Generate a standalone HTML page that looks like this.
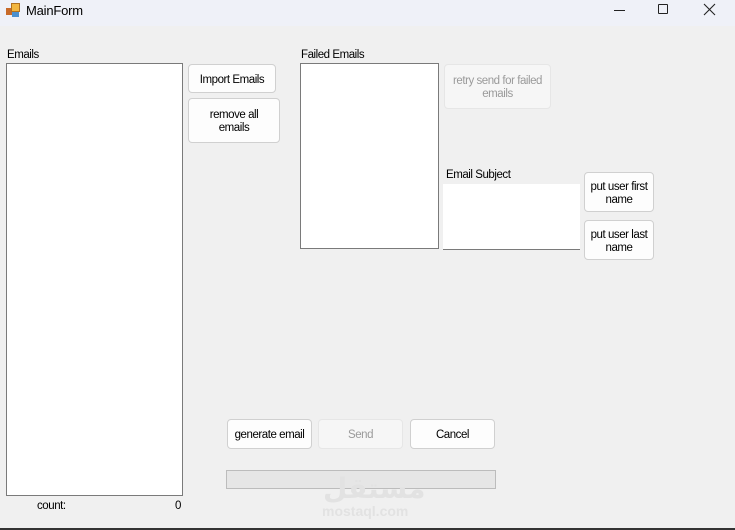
<!DOCTYPE html>
<html><head><style>
body{margin:0;width:735px;height:530px;background:#f0f0f0;font-family:"Liberation Sans",sans-serif;font-size:11.5px;color:#000;position:relative;overflow:hidden;letter-spacing:-0.45px}
.a{position:absolute;box-sizing:border-box}
.tb{left:0;top:0;width:735px;height:26px;background:#eff1f8}
.box{background:#fff;border:1px solid #7a7a7a}
.btn{background:#fdfdfd;border:1px solid #d0d0d0;border-radius:4px;display:flex;align-items:center;justify-content:center;text-align:center;line-height:13px;padding-top:3px}
.dis{background:#f6f6f6;border-color:#e6e6e6;color:#9a9a9a}
</style></head><body>
<div class="a tb"></div>
<div class="a" style="left:6px;top:3px;width:14px;height:14px">
<div class="a" style="left:0;top:5px;width:6px;height:7px;background:#c86a2a"></div>
<div class="a" style="left:5px;top:0;width:9px;height:9px;background:#f2b640;border:1px solid #b07020"></div>
<div class="a" style="left:6px;top:9px;width:7px;height:5px;background:#4a90d0"></div>
</div>
<div class="a" style="left:26px;top:3px;font-size:13px;letter-spacing:-0.2px">MainForm</div>
<div class="a" style="left:614px;top:10px;width:11px;height:1px;background:#222"></div>
<div class="a" style="left:658px;top:4px;width:10px;height:10px;border:1px solid #222;border-radius:1px"></div>
<svg class="a" style="left:703px;top:3px" width="13" height="13"><path d="M1 1L12 12M12 1L1 12" stroke="#222" stroke-width="1.1"/></svg>

<div class="a" style="left:7px;top:49px">Emails</div>
<div class="a box" style="left:6px;top:63px;width:177px;height:433px"></div>
<div class="a btn" style="left:188px;top:64px;width:88px;height:29px">Import Emails</div>
<div class="a btn" style="left:188px;top:98px;width:92px;height:45px">remove all<br>emails</div>

<div class="a" style="left:301px;top:49px">Failed Emails</div>
<div class="a box" style="left:300px;top:63px;width:139px;height:186px"></div>
<div class="a btn dis" style="left:444px;top:64px;width:107px;height:45px">retry send for failed<br>emails</div>

<div class="a" style="left:446px;top:169px">Email Subject</div>
<div class="a" style="left:443px;top:184px;width:137px;height:66px;background:#fff;border-bottom:1px solid #7a7a7a"></div>
<div class="a btn" style="left:584px;top:172px;width:70px;height:40px">put user first<br>name</div>
<div class="a btn" style="left:584px;top:220px;width:70px;height:40px">put user last<br>name</div>

<div class="a btn" style="left:227px;top:419px;width:85px;height:30px">generate email</div>
<div class="a btn dis" style="left:318px;top:419px;width:85px;height:30px">Send</div>
<div class="a btn" style="left:410px;top:419px;width:85px;height:30px">Cancel</div>
<div class="a" style="left:226px;top:470px;width:270px;height:19px;background:#e6e6e6;border:1px solid #bcbcbc"></div>

<div class="a" style="left:323px;top:472px;font-size:28px;font-weight:bold;color:#e2e2e2;letter-spacing:0;font-family:'DejaVu Sans',sans-serif">مستقل</div>
<div class="a" style="left:322px;top:503px;font-size:14px;font-weight:bold;color:#e2e2e2;letter-spacing:0">mostaql.com</div>

<div class="a" style="left:37px;top:500px">count:</div>
<div class="a" style="left:175px;top:500px">0</div>
<div class="a" style="left:0;top:528px;width:735px;height:2px;background:#333"></div>
</body></html>
